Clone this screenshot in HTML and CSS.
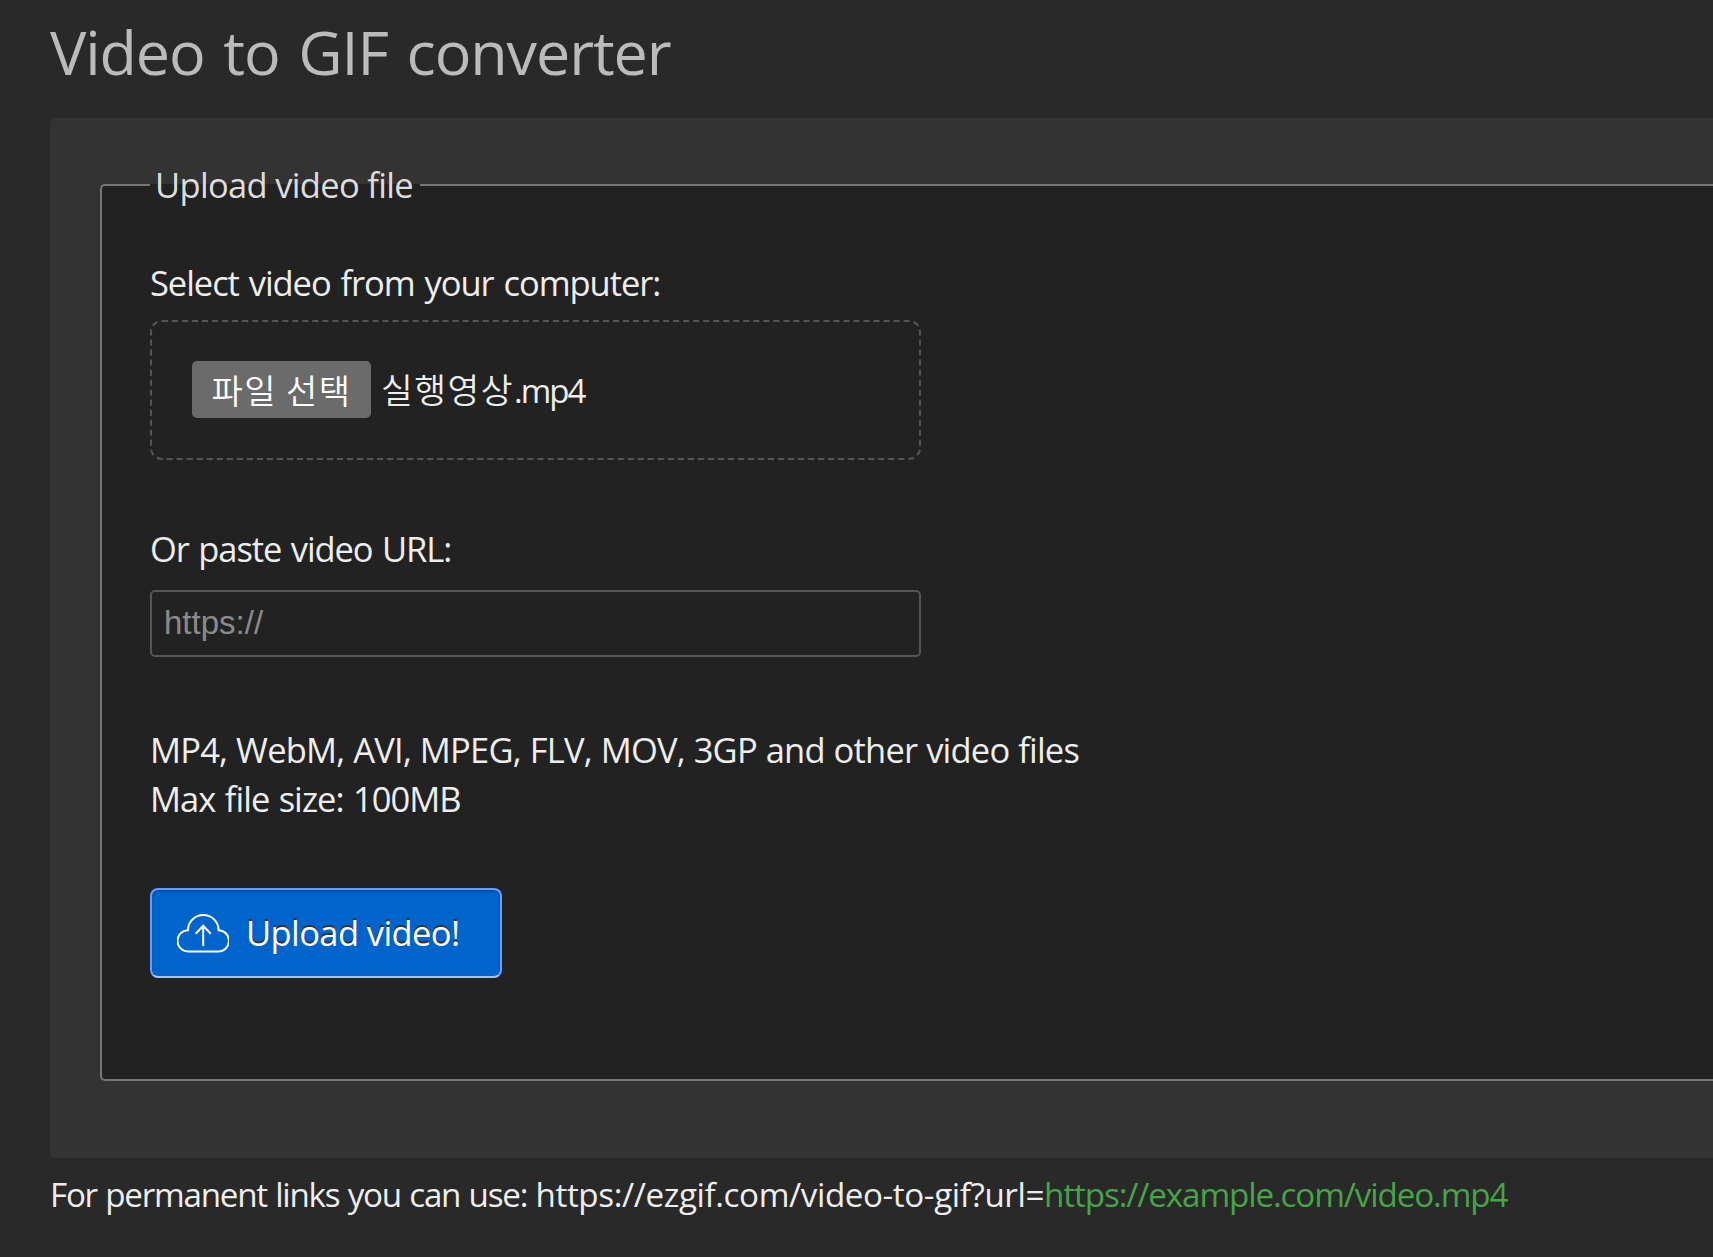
FILE: index.html
```html
<!DOCTYPE html>
<html lang="en">
<head>
<meta charset="utf-8">
<title>Video to GIF converter</title>
<link rel="stylesheet" href="styles.css">
</head>
<body>
<main class="page">
  <h1 class="title">Video to GIF converter</h1>
  <section class="panel">
    <fieldset class="upload">
      <legend class="legend">Upload video file</legend>
      <div class="text select">Select video from your computer:</div>
      <div class="drop">
        <button type="button" class="choose">파일 선택</button>
        <span class="filename"><span class="name" lang="ko">실행영상</span><span class="ext">.mp4</span></span>
      </div>
      <label class="text paste" for="url">Or paste video URL:</label>
      <input class="url" id="url" type="text" placeholder="https://">
      <p class="text formats">MP4, WebM, AVI, MPEG, FLV, MOV, 3GP and other video files</p>
      <p class="text size">Max file size: 100MB</p>
      <button type="button" class="submit">
        <svg class="cloud" viewBox="0 0 52 40" aria-hidden="true">
          <path d="M11.200 38.400a10.600 10.600 0 0 1-.2-21.200a15.300 15.300 0 0 1 30.600 0a10.600 10.600 0 0 1-.4 21.200Z"/>
          <path d="M26.200 33V13M18.700 20.800l7.500-8 7.500 8"/>
        </svg>
        <span class="submit-label">Upload video!</span>
      </button>
    </fieldset>
  </section>
  <p class="text permalink"><span class="intro">For permanent links you can use: </span><span class="base">https://ezgif.com/video-to-gif?url=</span><span class="link">https://example.com/video.mp4</span></p>
</main>
</body>
</html>
```
FILE: styles.css
```css
* { box-sizing: border-box; }
body {
  margin: 0;
  height: 1257px;
  overflow: hidden;
  background: #292929;
  color: #eee;
  font: 34.5px/49px "Open Sans", "Noto Sans CJK KR", sans-serif;
}
.page { padding: 12px 0 0 50px; }
.title {
  margin: 0 0 26px;
  color: #bbb;
  font-size: 61px;
  font-weight: 400;
  line-height: 80px;
  letter-spacing: -1.1px;
  word-spacing: 4px;
  white-space: nowrap;
}
.panel {
  height: 1040px;
  padding: 42px 0 0 50px;
  background: #333;
  border-radius: 5px 0 0 5px;
}
.upload {
  display: block;
  height: 921px;
  min-width: 0;
  margin: 0;
  padding: 49px 0 0 48px;
  background: #222;
  border: 2px solid #777;
  border-right: 0;
  border-radius: 5px 0 0 5px;
}
.legend {
  padding: 0 7px 0 5px;
  color: #ddd;
  letter-spacing: -.68px;
}
.text { display: block; margin: 0; white-space: nowrap; }
.select { letter-spacing: -1.06px; word-spacing: 2px; }
.paste { letter-spacing: -1.1px; word-spacing: 1.7px; }
.formats { letter-spacing: -.8px; word-spacing: .7px; }
.size { letter-spacing: -.95px; word-spacing: 1.3px; }
.drop {
  display: flex;
  align-items: center;
  gap: 10px;
  width: 771px;
  height: 140px;
  margin: 13px 0 64px;
  padding: 0 40px 2px;
  border: 2px dashed #555;
  border-radius: 12px;
}
.choose {
  width: 179px;
  height: 57px;
  padding: 0;
  background: #6b6b6b;
  border: 0;
  border-radius: 5px;
  color: #fff;
  font: 34px/55px "Noto Sans CJK KR", sans-serif;
  font-weight: 350;
  letter-spacing: 1.5px;
}
.filename { padding-top: 2px; }
.name { font-weight: 350; letter-spacing: 1.5px; }
.ext { font-size: 33px; letter-spacing: -2px; }
.url {
  display: block;
  width: 771px;
  height: 67px;
  margin: 17px 0 68px;
  padding: 0 12px 2px;
  background: #222;
  border: 2px solid #555;
  border-radius: 5px;
  font: 33px "Liberation Sans", sans-serif;
}
.url::placeholder { color: #8b8b8b; }
.submit {
  display: flex;
  align-items: center;
  gap: 17px;
  width: 352px;
  height: 90px;
  margin-top: 65px;
  padding: 0 25px;
  background: #0064cd;
  border: 2px solid #6b9cff;
  border-bottom-color: #a5c5f5;
  border-radius: 8px;
  box-shadow: inset 0 2px 3px rgba(0, 0, 0, .2);
  color: #fff;
  font: inherit;
  text-shadow: 0 -2px 0 #333;
  white-space: nowrap;
}
.submit-label { padding-bottom: 1px; letter-spacing: -.6px; }
.cloud {
  width: 52px;
  height: 40px;
  fill: none;
  stroke: #fff;
  stroke-width: 2;
}
.permalink { margin-top: 12px; font-size: 33.2px; }
.intro { letter-spacing: -1.25px; word-spacing: 1px; }
.base { letter-spacing: -.4px; }
.link { color: #46a546; letter-spacing: -1.12px; }
```
